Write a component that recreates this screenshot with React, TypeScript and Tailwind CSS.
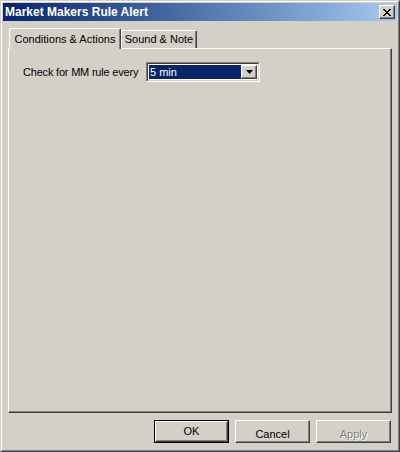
import React from 'react';

const font = { fontFamily: '"Liberation Sans", Arial, sans-serif' };

const raised =
  'border border-t-white border-l-white border-r-[#404040] border-b-[#404040] shadow-[inset_-1px_-1px_0_#808080]';

const DialogButton: React.FC<{ label: string; primary?: boolean; disabled?: boolean }> = ({
  label,
  primary,
  disabled,
}) => (
  <button
    className={
      primary
        ? 'w-[75px] h-[23px] border border-black bg-[#d4d0c8] p-0'
        : 'w-[75px] h-[23px] bg-[#d4d0c8] p-0 ' + raised
    }
  >
    {primary ? (
      <span className={'flex w-full h-full items-center justify-center text-[11px] text-black ' + raised}>
        {label}
      </span>
    ) : (
      <span
        className={
          disabled
            ? 'text-[11px] text-[#808080] [text-shadow:1px_1px_0_#ffffff]'
            : 'text-[11px] text-black'
        }
      >
        {label}
      </span>
    )}
  </button>
);

const App: React.FC = () => {
  return (
    <div
      className="w-[400px] h-[452px] bg-[#d4d0c8] border border-t-[#d4d0c8] border-l-[#d4d0c8] border-r-[#404040] border-b-[#404040]"
      style={font}
    >
      <div className="w-full h-full border border-t-white border-l-white border-r-[#808080] border-b-[#808080] p-px flex flex-col">
        {/* title bar */}
        <div className="h-[18px] flex items-center justify-between pl-[2px] pr-[2px] bg-gradient-to-r from-[#0a246a] to-[#a6caf0]">
          <span className="text-white font-bold text-[12px] leading-none">Market Makers Rule Alert</span>
          <div className={'w-[16px] h-[14px] bg-[#d4d0c8] flex items-center justify-center ' + raised}>
            <svg width="8" height="7" viewBox="0 0 8 7">
              <path d="M0 0h2v1h1v1h2V1h1V0h2v1H7v1H6v1H5v1h1v1h1v1h1v1H6V6H5V5H3v1H2v1H0V6h1V5h1V4h1V3H2V2H1V1H0z" fill="#000" />
            </svg>
          </div>
        </div>

        {/* body */}
        <div className="flex-1 flex flex-col pl-[5px] pr-[5px] pt-[7px] pb-[6px]">
          {/* tabs */}
          <div className="flex items-end h-[20px] pl-px relative z-10">
            <div className="h-[21px] -mb-px w-[112px] bg-[#d4d0c8] border-l border-t border-r border-l-white border-t-white border-r-[#404040] rounded-tl-[2px] rounded-tr-[2px] shadow-[inset_-1px_0_0_#808080] flex items-center justify-center text-[11px] text-black">
              Conditions &amp; Actions
            </div>
            <div className="h-[18px] w-[76px] bg-[#d4d0c8] border-l border-t border-r border-l-white border-t-white border-r-[#404040] rounded-tr-[2px] shadow-[inset_-1px_0_0_#808080] flex items-center justify-center text-[11px] text-black">
              Sound &amp; Note
            </div>
          </div>

          {/* panel */}
          <div className={'flex-1 bg-[#d4d0c8] pl-[14px] pt-[13px] ' + raised}>
            <div className="flex items-center">
              <span className="w-[123px] text-[11px] text-black tracking-[-0.2px]">Check for MM rule every</span>
              <div className="w-[114px] h-[20px] border border-t-[#808080] border-l-[#808080] border-r-white border-b-white">
                <div className="w-full h-full border border-t-[#404040] border-l-[#404040] border-r-[#d4d0c8] border-b-[#d4d0c8] bg-white flex items-center p-px">
                  <div className="flex-1 h-full bg-[#0a246a] text-white text-[11px] flex items-center pl-px leading-none">
                    5 min
                  </div>
                  <div className={'w-[16px] h-full bg-[#d4d0c8] flex items-center justify-center ' + raised}>
                    <svg width="7" height="4" viewBox="0 0 7 4">
                      <path d="M0 0h7L3.5 4z" fill="#000" />
                    </svg>
                  </div>
                </div>
              </div>
            </div>
          </div>

          {/* buttons */}
          <div className="flex justify-end gap-[6px] pt-[7px] pr-px">
            <DialogButton label="OK" primary />
            <DialogButton label="Cancel" />
            <DialogButton label="Apply" disabled />
          </div>
        </div>
      </div>
    </div>
  );
};

export default App;
